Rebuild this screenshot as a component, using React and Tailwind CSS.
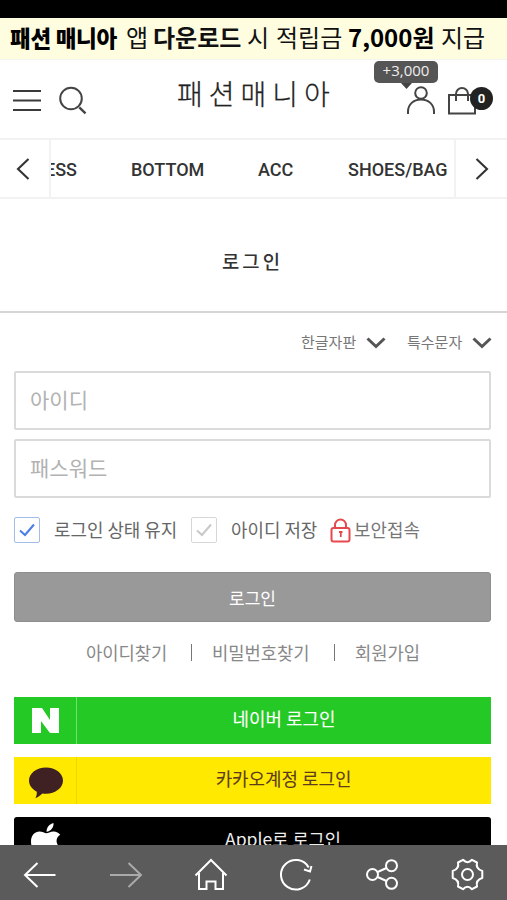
import React from 'react';

const categories = [
  { label: 'BOTTOM', className: 'w-[72px]' },
  { label: 'ACC', className: 'ml-[55px] w-[35px]' },
  { label: 'SHOES/BAG', className: 'ml-[55px] w-[98px]' },
];

const Chevron = ({ className }) => (
  <svg className={className} viewBox="0 0 20 12" fill="none" stroke="#555" strokeWidth="3">
    <path d="M1.5 1.5 10 9.5l8.5-8" />
  </svg>
);

const Banner = () => (
  <div className="h-[41px] shrink-0 bg-[#fffde0] flex items-center pb-[3px] pl-[10px] text-[24px] leading-none text-[#111] whitespace-nowrap">
    <span className="w-[116px] text-[22.5px] font-black tracking-[-0.3px] text-black">패션 매니아</span>
    <span className="w-[27px]">앱</span>
    <span className="w-[94px] font-bold">다운로드</span>
    <span className="w-[29px]">시</span>
    <span className="w-[72px]">적립금</span>
    <span className="w-[93px] font-bold text-black">7,000원</span>
    <span>지급</span>
  </div>
);

const Header = () => (
  <header className="h-[79px] shrink-0 flex items-start border-t border-[#f3f3f3] pl-3">
    <button className="mt-[29px]" aria-label="menu">
      <svg className="w-[30px] h-6" viewBox="0 0 30 24" stroke="#3a3a3a" strokeWidth="2.2">
        <path d="M1 2h28M1 11.5h28M1 21h28" />
      </svg>
    </button>
    <button className="mt-[26px] ml-4" aria-label="search">
      <svg className="w-[30px] h-[30px]" viewBox="0 0 30 30" fill="none" stroke="#444" strokeWidth="2">
        <circle cx="13" cy="12.5" r="10.8" />
        <path d="m21.3 21.3 6.2 6" strokeWidth="2.4" />
      </svg>
    </button>
    <h1 className="ml-[89px] mt-[15px] w-[229px] font-light text-[28px] leading-[36px] tracking-[6px] text-[#222] [-webkit-text-stroke:0.3px] whitespace-nowrap">
      패션매니아
    </h1>
    <button className="relative mt-[26px]" aria-label="my page">
      <svg className="w-[30px] h-7" viewBox="0 0 30 28" fill="none" stroke="#444" strokeWidth="2">
        <circle cx="15" cy="7" r="5.8" />
        <path d="M2 28v-2.5C2 18.5 7.5 13.5 15 13.5S28 18.5 28 25.5V28" />
      </svg>
      <span className="absolute left-[-32px] top-[-25px] w-16 h-[22px] rounded-[5px] bg-[#555] text-[#eee] text-[15px] leading-[19px] font-['Open_Sans','Noto_Sans',sans-serif]">
        +3,000
        <svg className="absolute left-[27px] top-[22px] w-[11px] h-[6px]" viewBox="0 0 11 6">
          <path d="M0 0h11L5.5 6z" fill="#444" />
        </svg>
      </span>
    </button>
    <button className="relative mt-[27px] ml-[11px]" aria-label="cart">
      <svg className="w-[30px] h-7" viewBox="0 0 30 28" fill="none" stroke="#444" strokeWidth="2">
        <path d="M2 8h26v18.500H2zM9 14V7a6 6 0 0 1 12 0v7" />
      </svg>
      <span className="absolute left-[23px] top-0 w-[23px] h-[23px] rounded-full bg-[#222] text-white text-[13px] leading-[23px] font-bold font-[Roboto,sans-serif]">
        0
      </span>
    </button>
  </header>
);

const CategoryNav = () => (
  <nav className="h-[61px] shrink-0 flex items-center border-y-2 border-[#f2f2f2] font-[Roboto,sans-serif] font-medium text-[18px] text-[#333]">
    <button className="w-[51px] h-full border-r-2 border-[#f2f2f2] flex items-center pl-4" aria-label="previous">
      <svg className="w-[14px] h-[22px]" viewBox="0 0 14 22" fill="none" stroke="#333" strokeWidth="2.1">
        <path d="M12.500 1 2 11l10.500 10" />
      </svg>
    </button>
    <div className="w-[403px] flex overflow-hidden whitespace-nowrap pt-[2px]">
      <span className="flex w-[26px] justify-end overflow-hidden">DRESS</span>
      <div className="flex pl-[54px]">
        {categories.map((item) => (
          <span key={item.label} className={item.className}>{item.label}</span>
        ))}
      </div>
    </div>
    <button className="w-[53px] h-full border-l-2 border-[#f2f2f2] flex items-center pl-[19px]" aria-label="next">
      <svg className="w-[14px] h-[22px]" viewBox="0 0 14 22" fill="none" stroke="#333" strokeWidth="2.1">
        <path d="m1.500 1 10.500 10-10.500 10" />
      </svg>
    </button>
  </nav>
);

const Checkbox = ({ checked }) => (
  <span className={`w-[26px] h-[26px] border-[1.5px] rounded-[2px] flex items-center justify-center ${checked ? 'border-[#a4bde8]' : 'border-[#d6d6d6]'}`}>
    <svg className="w-4 h-[14px]" viewBox="0 0 16 14" fill="none" stroke={checked ? '#4a7de8' : '#c8c8c8'} strokeWidth="2">
      <path d="m1 7.500 5 4.500L15 1.500" />
    </svg>
  </span>
);

const LoginForm = () => (
  <form className="pl-[14px] pr-4">
    <div className="flex h-[58px] items-center justify-end text-[15px] text-[#777] pt-[2px]">
      <span className="w-[65px] pb-px">한글자판</span>
      <Chevron className="w-5 h-3" />
      <span className="ml-[21px] w-[65px] pb-px">특수문자</span>
      <Chevron className="w-5 h-3 -mr-px" />
    </div>
    <input
      className="block w-full h-[59px] border-2 border-[#dadada] rounded-[2px] px-[14px] pb-[3px] text-[21px] placeholder:text-[#b2b2b2]"
      placeholder="아이디"
    />
    <input
      className="block w-full h-[59px] mt-[9px] border-2 border-[#dadada] rounded-[2px] px-[14px] pb-[3px] text-[21px] placeholder:text-[#b2b2b2]"
      placeholder="패스워드"
    />
    <div className="flex items-center h-[26px] mt-[19px] text-[17.900px] leading-[24px] text-[#666] whitespace-nowrap">
      <Checkbox checked />
      <span className="ml-[14px] w-[137px] pb-[3px]">로그인 상태 유지</span>
      <Checkbox />
      <span className="ml-[14px] w-[99px] pb-[3px]">아이디 저장</span>
      <svg className="w-[21px] h-[25px]" viewBox="0 0 21 25" fill="none" stroke="#e5494d" strokeWidth="2">
        <rect x="1.500" y="10" width="18" height="13.500" rx="2" />
        <path d="M5 10V7a5.500 5.500 0 0 1 11 0v3" />
        <path d="M9 14h3.500M10.800 14v5" strokeWidth="1.800" />
      </svg>
      <span className="ml-[3px] pb-[3px] text-[#777]">보안접속</span>
    </div>
    <button type="button" className="block w-full h-[50px] mt-[29px] pt-px rounded-[3px] bg-[#999] border border-[#8e8e8e] text-[17px] text-white">
      로그인
    </button>
    <div className="flex items-center h-[26px] mt-[17px] pl-[72px] text-[17.700px] text-[#888] whitespace-nowrap">
      <a className="w-[105px]">아이디찾기</a>
      <span className="w-px h-[17px] bg-[#777]" />
      <a className="ml-[20px] w-[122px]">비밀번호찾기</a>
      <span className="w-px h-[17px] bg-[#777]" />
      <a className="ml-[20px]">회원가입</a>
    </div>
    <div className="mt-[32px] flex flex-col gap-[13px] text-[17.900px]">
      <button type="button" className="flex h-[47px] bg-[#25c925] text-white">
        <span className="w-[63px] h-full flex items-center justify-center border-r border-[#74dd74]">
          <svg className="w-[27px] h-[25px]" viewBox="0 0 27 25" fill="#fff">
            <path d="M0 0h10l8 12V0h9v25H18L9 13v12H0z" />
          </svg>
        </span>
        <span className="flex-1 self-center pb-[4px] [-webkit-text-stroke:0.1px]">네이버 로그인</span>
      </button>
      <button type="button" className="flex h-[47px] bg-[#ffe900] text-[#5c3c1c]">
        <span className="w-[63px] h-full flex items-center justify-center border-r border-[#eed500] pt-[4px] pl-[2px]">
          <svg className="w-[34px] h-[32px]" viewBox="0 0 34 32" fill="#3f2023">
            <path d="M17 .5c9.400 0 17 5.700 17 13s-7.600 13.200-17 13.200c-1.300 0-2.500 0-3.600-.3C11.500 28 9.500 30 6.300 31.200c1.200-2 1.600-4 1.500-6.500C3.100 22.300 0 18.300 0 13.500 0 6.200 7.600.5 17 .5z" />
          </svg>
        </span>
        <span className="flex-1 self-center pb-[4px] pr-px [-webkit-text-stroke:0.1px]">카카오계정 로그인</span>
      </button>
      <button type="button" className="flex h-[47px] rounded-[3px] bg-black text-[#eee]">
        <span className="w-[63px] h-full flex justify-center pt-[6px]">
          <svg className="w-[30px] h-[36px]" viewBox="0 0 30 36" fill="#fff">
            <path d="M15.500 8.800c0-4.500 3-7.800 7-8.800.5 4.300-2.700 8.200-7 8.800z" />
            <path d="M15.500 10.200c1.300 0 4-1.900 7.200-1.800 2.700.1 5.100 1.300 6.500 3.400-5.400 3.200-4.600 10.600 1 12.900-1.500 4.300-4.700 9.300-8.100 9.300-2.300 0-3.500-1.500-6.400-1.500s-4.200 1.500-6.300 1.500C4.800 34 0 25.500 0 18.500 0 12 4.200 8.500 8.400 8.500c2.900 0 5.300 1.700 7.100 1.700z" />
          </svg>
        </span>
        <span className="flex-1 self-center pr-[2px] pb-[2px] text-[17.600px]">Apple로 로그인</span>
      </button>
    </div>
  </form>
);

const Toolbar = () => (
  <footer className="h-[55px] shrink-0 bg-[#5b5b5b] flex items-center pl-[23px] pt-[4px] gap-[51.500px]">
    <svg className="w-[34px] h-[34px] shrink-0" viewBox="0 0 34 34" fill="none" stroke="#fff" strokeWidth="2">
      <path d="M32.500 17H2M14.500 5 2 17l12.500 12" />
    </svg>
    <svg className="w-[34px] h-[34px] shrink-0" viewBox="0 0 34 34" fill="none" stroke="#aaa" strokeWidth="2">
      <path d="M1 17h31M19.500 5 32 17 19.500 29" />
    </svg>
    <svg className="w-[34px] h-[34px] shrink-0" viewBox="0 0 34 34" fill="none" stroke="#fff" strokeWidth="2">
      <path d="M1.500 17.500 17 2l15.500 15.500M5 15v16h7.500V23.500h9V31H29V15" />
    </svg>
    <svg className="w-[34px] h-[34px] shrink-0" viewBox="0 0 34 34" fill="none" stroke="#fff" strokeWidth="2">
      <path d="M29.800 21.500A14.800 14.800 0 1 1 28.700 9.500M31.500 8l-1.500 5.500-6-2" />
    </svg>
    <svg className="w-[34px] h-[34px] shrink-0" viewBox="0 0 34 34" fill="none" stroke="#fff" strokeWidth="2">
      <circle cx="7.500" cy="16.500" r="5.500" />
      <circle cx="26.500" cy="7.700" r="5.500" />
      <circle cx="26.500" cy="25.300" r="5.500" />
      <path d="m12.600 14 8.900-4M12.600 19l8.900 4" />
    </svg>
    <svg className="w-[34px] h-[34px] shrink-0" viewBox="0 0 34 34" fill="none" stroke="#fff" strokeWidth="2" strokeLinejoin="round">
      <circle cx="16.500" cy="16.500" r="5.500" />
      <path d="M12 1.800Q16.500 6.500 21 1.800L26 4.500Q24.500 11 31.300 13v7Q24.500 22 26 28.500l-5 2.700Q16.500 26.500 12 31.200L7 28.500Q8.500 22 1.700 20v-7Q8.500 11 7 4.500z" />
    </svg>
  </footer>
);

const App = () => {
  return (
    <div className="w-[507px] h-[900px] overflow-hidden flex flex-col bg-white font-['Noto_Sans_CJK_KR',sans-serif]">
      <div className="h-[18px] shrink-0 bg-black" />
      <Banner />
      <Header />
      <CategoryNav />
      <main className="flex-1 min-h-0 overflow-hidden">
        <h2 className="h-[114px] pt-[13px] pr-[2px] border-b-2 border-[#d5d5d5] flex items-center justify-center font-medium text-[18.800px] tracking-[3px] text-[#333]">
          로그인
        </h2>
        <LoginForm />
      </main>
      <Toolbar />
    </div>
  );
};

export default App;
